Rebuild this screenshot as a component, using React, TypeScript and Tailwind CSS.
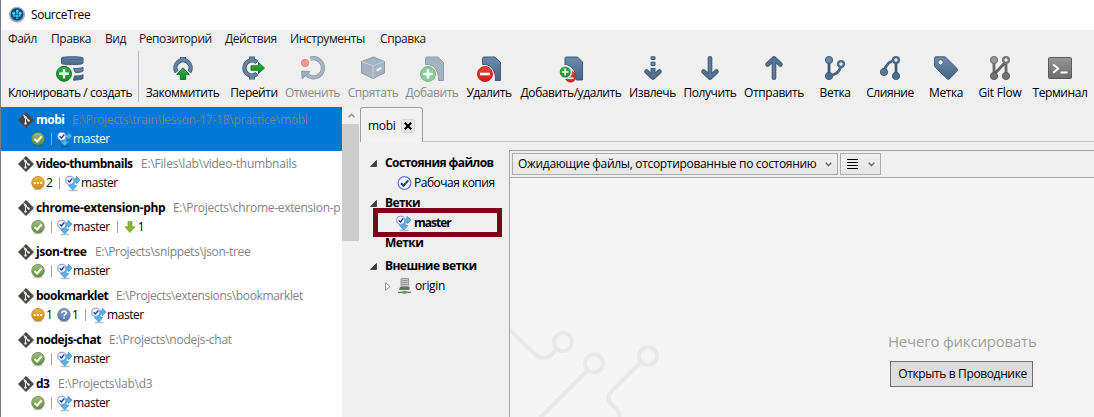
import React from "react";

type Children = { children?: React.ReactNode };

function Defs() {
  return (
    <svg className="absolute h-0 w-0" aria-hidden="true">
      <defs>
        <linearGradient id="steel" x1="0" y1="0" x2="0" y2="1">
          <stop offset="0" stopColor="#6a8bac" />
          <stop offset="1" stopColor="#476585" />
        </linearGradient>
        <linearGradient id="greyUser" gradientUnits="userSpaceOnUse" x1="0" y1="0" x2="0" y2="24">
          <stop offset="0" stopColor="#9a9a9a" />
          <stop offset="1" stopColor="#686868" />
        </linearGradient>
        <linearGradient id="green" x1="0" y1="0" x2="0" y2="1">
          <stop offset="0" stopColor="#35b045" />
          <stop offset="1" stopColor="#158a28" />
        </linearGradient>
        <linearGradient id="red" x1="0" y1="0" x2="0" y2="1">
          <stop offset="0" stopColor="#e8453a" />
          <stop offset="1" stopColor="#c81f18" />
        </linearGradient>
        <linearGradient id="olive" x1="0" y1="0" x2="0" y2="1">
          <stop offset="0" stopColor="#a3bf79" />
          <stop offset="1" stopColor="#5f8f3c" />
        </linearGradient>
        <linearGradient id="amber" x1="0" y1="0" x2="0" y2="1">
          <stop offset="0" stopColor="#f3b53c" />
          <stop offset="1" stopColor="#d68a12" />
        </linearGradient>
        <linearGradient id="slate" x1="0" y1="0" x2="0" y2="1">
          <stop offset="0" stopColor="#86a3c6" />
          <stop offset="1" stopColor="#4d75a6" />
        </linearGradient>
      </defs>
    </svg>
  );
}

function Icon({ children, className = "h-6 w-6", box = "0 0 24 24" }: Children & { className?: string; box?: string }) {
  return (
    <svg viewBox={box} className={`block shrink-0 overflow-visible ${className}`} fill="none">
      {children}
    </svg>
  );
}

const edge = "#3f5a76";

const CloneIcon = () => (
  <Icon className="h-[26px] w-[28px]" box="0 0 28 26">
    <path d="M5.5 2C5.5.3 27 .3 27 2v5.300c0 1.700-21.500 1.700-21.500 0z" fill="url(#steel)" stroke={edge} />
    <path d="M5.500 2.200c0 1.600 21.500 1.600 21.500 0" stroke={edge} strokeWidth=".7" />
    <path d="M17.500 12.600c4 0 7.500-.3 9.500-1.300v3.700c-1.500 1-4.500 1.500-7.500 1.600zM18.500 20c4 0 7-.4 8.500-1.300v3.800c-1.500 1-5 1.500-9.500 1.700z" fill="url(#steel)" stroke={edge} />
    <circle cx="8" cy="17.800" r="7.500" fill="url(#green)" stroke="#0f7a24" />
    <path d="M8 13v9.600M3.200 17.800h9.600" stroke="#fff" strokeWidth="2.400" />
  </Icon>
);

const CommitIcon = () => (
  <Icon>
    <path d="M12 1v5" stroke={edge} strokeWidth="6" />
    <path d="M5.600 16a7.600 7.600 0 1 1 12.800 0" stroke={edge} strokeWidth="4.400" />
    <path d="M12 1.500v4" stroke="#6484a5" strokeWidth="4" />
    <path d="M5.600 15.500a7.600 7.600 0 1 1 12.800 0" stroke="#6484a3" strokeWidth="2.800" />
    <path d="M12 11.800l6.300 6.500h-3.600v5.200H9.300v-5.200H5.700z" fill="url(#green)" stroke="#0f7a24" />
  </Icon>
);

const CheckoutIcon = () => (
  <Icon>
    <path d="M10 .5v5M10 18.500v5" stroke={edge} strokeWidth="6" />
    <path d="M15 6.300a7.600 7.600 0 1 0 0 11.400" stroke={edge} strokeWidth="4.400" />
    <path d="M10 1.200v5M10 18v5" stroke="#6484a3" strokeWidth="4" />
    <path d="M14.500 6a7.600 7.600 0 1 0 0 12" stroke="#6484a3" strokeWidth="2.800" />
    <path d="M22.500 12l-6-5.500v3.300H9v4.400h7.500v3.300z" fill="url(#green)" stroke="#0f7a24" />
  </Icon>
);

const UndoIcon = () => (
  <Icon>
    <path d="M9.500 2.700A9.600 9.600 0 1 1 5.500 18.500" stroke="#8899ab" strokeWidth="4.200" />
    <path d="M9.500 2.700A9.600 9.600 0 1 1 5.500 18.500" stroke="#a7b5c4" strokeWidth="2.800" />
    <path d="M.7 15l8.300.6-7.800 7.200z" fill="#a0afbf" stroke="#8899ab" />
    <circle cx="4" cy="7" r="3.700" fill="#ea9a91" stroke="#dc8178" strokeWidth=".8" />
  </Icon>
);

const StashIcon = () => (
  <Icon>
    <path d="M.5 5.500L12.500 1l11 4.500V17L12 22.500.5 17z" fill="#a4b3c3" stroke="#8c9cac" />
    <path d="M.7 5.500L12 9.800l11.300-4.300M12 9.800v12.500" stroke="#c6d0da" strokeWidth="1" />
    <path d="M15.500 13l5-2.400v2.700l-5 2.300z" fill="#eef1f4" />
  </Icon>
);

const sheet = "M7 1h11l5.500 5.500V24.500h-5C19 13 12.500 7.500 5.500 8.500V2.500C5.500 1.500 6 1 7 1z";

const AddIcon = () => (
  <Icon className="h-[26px] w-6" box="0 0 24 26">
    <path d={sheet} fill="#a4b2c1" stroke="#8e9dac" />
    <circle cx="8" cy="18" r="7.500" fill="#8fcb99" stroke="#7bb886" />
    <path d="M8 13.300v9.400M3.300 18h9.400" stroke="#fff" strokeWidth="2.400" />
  </Icon>
);

const RemoveIcon = () => (
  <Icon className="h-[26px] w-6" box="0 0 24 26">
    <path d={sheet} fill="url(#steel)" stroke={edge} />
    <circle cx="8" cy="18" r="7.500" fill="url(#red)" stroke="#b92a22" />
    <path d="M3 18h10" stroke="#fff" strokeWidth="2.600" />
  </Icon>
);

const AddRemoveIcon = () => (
  <Icon className="h-[26px] w-6" box="0 0 24 26">
    <path d="M7.500 1h11L23.500 6v18h-6C17 14 12 9 6 9V2.500C6 1.500 6.500 1 7.500 1z" fill="url(#steel)" stroke={edge} />
    <circle cx="11.500" cy="20.800" r="5.300" fill="url(#red)" stroke="#b92a22" />
    <path d="M8.500 22.300h6" stroke="#fff" strokeWidth="1.700" />
    <circle cx="6.200" cy="16" r="6.200" fill="url(#green)" stroke="#efefef" strokeWidth="1.400" />
    <path d="M6.200 12.600v6.800M2.800 16h6.800" stroke="#fff" strokeWidth="1.700" />
  </Icon>
);

const arrowHead = "M5.500 15.500l6.500 6 6.500-6";

const FetchIcon = () => (
  <Icon>
    <path d="M12 12v9" stroke={edge} strokeWidth="5" />
    <path d={arrowHead} stroke={edge} strokeWidth="4.600" strokeLinecap="round" strokeLinejoin="round" />
    <path d="M12 12.800v8" stroke="#55769a" strokeWidth="3" />
    <path d={arrowHead} stroke="#53728f" strokeWidth="2.700" strokeLinecap="round" strokeLinejoin="round" />
    <path d="M10 .8h4v2.700h-4zM10 6.200h4v3.300h-4z" fill="#6a8bac" stroke={edge} />
  </Icon>
);

const PullIcon = ({ up = false }: { up?: boolean }) => (
  <Icon className={up ? "h-6 w-6 rotate-180" : "h-6 w-6"}>
    <path d="M12 2.300v19" stroke={edge} strokeWidth="4.600" strokeLinecap="round" />
    <path d={arrowHead} stroke={edge} strokeWidth="4.600" strokeLinecap="round" strokeLinejoin="round" />
    <path d="M12 2.300v18.500" stroke="#5b7c9d" strokeWidth="2.700" strokeLinecap="round" />
    <path d={arrowHead} stroke="#53728f" strokeWidth="2.700" strokeLinecap="round" strokeLinejoin="round" />
  </Icon>
);

const BranchIcon = () => (
  <Icon>
    <path d="M6 4v16" stroke={edge} strokeWidth="2.800" />
    <path d="M6 19.500c6 0 10-3 12-9" stroke="#466483" strokeWidth="2.800" />
    <circle cx="6" cy="4" r="3.600" fill="#6a8bac" stroke={edge} />
    <circle cx="6" cy="20" r="3.600" fill="#4d6c8c" stroke={edge} />
    <circle cx="18" cy="8" r="2.900" fill="#efefef" stroke="#4c6b8b" strokeWidth="2.400" />
  </Icon>
);

const MergeIcon = () => (
  <Icon>
    <path d="M18 4v16" stroke={edge} strokeWidth="2.800" />
    <path d="M18 4.300c-6 0-10 4-12 11" stroke="#466483" strokeWidth="2.800" />
    <circle cx="18" cy="4" r="2.900" fill="#efefef" stroke="#4c6b8b" strokeWidth="2.400" />
    <circle cx="6" cy="16" r="3.600" fill="#587897" stroke={edge} />
    <circle cx="18" cy="20" r="3.600" fill="#4d6c8c" stroke={edge} />
  </Icon>
);

const TagIcon = () => (
  <Icon>
    <path d="M2 .8h8c1 0 1.500.3 2.200 1L23 12.500c.8.900.8 1.800 0 2.700l-7.300 7.500c-.9.800-1.900.8-2.700 0L1.500 11.500C.8 10.900.6 10.300.6 9.500V2.300C.6 1.400 1 .8 2 .8z" fill="url(#steel)" stroke={edge} />
    <circle cx="6.500" cy="6.300" r="2.600" fill="#efefef" stroke={edge} strokeWidth=".8" />
  </Icon>
);

const FlowIcon = () => (
  <Icon>
    <path d="M6 4v16M18 4v16" stroke="#686868" strokeWidth="2.800" />
    <path d="M6 18.500l12-13" stroke="#5e5e5e" strokeWidth="2.800" />
    <circle cx="6" cy="4" r="3.600" fill="#999" stroke="#6c6c6c" />
    <circle cx="6" cy="20" r="3.600" fill="#737373" stroke="#595959" />
    <circle cx="18" cy="20" r="3.600" fill="#737373" stroke="#595959" />
    <circle cx="18" cy="4" r="2.900" fill="#efefef" stroke="#777" strokeWidth="2.400" />
  </Icon>
);

const TerminalIcon = () => (
  <Icon>
    <rect x=".5" y="1.500" width="23" height="21" rx="1" fill="url(#greyUser)" stroke="#5d5d5d" />
    <path d="M5.200 8.500l5 4-5 4.300" stroke="#fff" strokeWidth="2" />
    <path d="M12.500 16.500h7" stroke="#fff" strokeWidth="2" />
  </Icon>
);

type Tool = { label: string; icon: React.ReactNode; cell: string; text?: string };

const tools: Tool[] = [
  { label: "Закоммитить", icon: <CommitIcon />, cell: "ml-[5px] w-[77px]" },
  { label: "Перейти", icon: <CheckoutIcon />, cell: "ml-[9px] w-[48px]" },
  { label: "Отменить", icon: <UndoIcon />, cell: "ml-[7px] w-[55px]", text: "text-[#8a8a8a]" },
  { label: "Спрятать", icon: <StashIcon />, cell: "ml-[7px] w-[52px]", text: "text-[#8a8a8a]" },
  { label: "Добавить", icon: <AddIcon />, cell: "ml-[6px] w-[54px]", text: "text-[#8a8a8a]" },
  { label: "Удалить", icon: <RemoveIcon />, cell: "ml-[7px] w-[46px]" },
  { label: "Добавить/удалить", icon: <AddRemoveIcon />, cell: "ml-[8px] w-[102px]" },
  { label: "Извлечь", icon: <FetchIcon />, cell: "ml-[7px] w-[47px]" },
  { label: "Получить", icon: <PullIcon />, cell: "ml-[6px] w-[56px]" },
  { label: "Отправить", icon: <PullIcon up />, cell: "ml-[6px] w-[60px]" },
  { label: "Ветка", icon: <BranchIcon />, cell: "ml-[15px] w-[32px]" },
  { label: "Слияние", icon: <MergeIcon />, cell: "ml-[14px] w-[50px]" },
  { label: "Метка", icon: <TagIcon />, cell: "ml-[13px] w-[36px]" },
  { label: "Git Flow", icon: <FlowIcon />, cell: "ml-[14px] w-[44px]", text: "tracking-[-0.25px]" },
  { label: "Терминал", icon: <TerminalIcon />, cell: "ml-[9px] w-[58px]" },
];

function ToolButton({ label, icon, cell, text = "" }: Tool) {
  return (
    <div className={`flex shrink-0 flex-col items-center ${cell}`}>
      <div className="flex h-[29px] items-start">{icon}</div>
      <span className={`leading-4 whitespace-nowrap ${text}`}>{label}</span>
    </div>
  );
}

const GitIcon = () => (
  <Icon className="h-4 w-4" box="0 0 16 16">
    <path d="M8 .5L15.500 8 8 15.500.5 8z" fill="#474443" stroke="#474443" strokeLinejoin="round" />
    <path d="M5.500 3l2 2v7M7.500 5.500l3 3" stroke="#eee" strokeWidth="1.100" />
    <circle cx="7.500" cy="5.200" r="1.200" fill="#eee" />
    <circle cx="7.500" cy="11.500" r="1.200" fill="#eee" />
    <circle cx="10.700" cy="8.600" r="1.200" fill="#eee" />
  </Icon>
);

const OkIcon = () => (
  <Icon className="h-[14px] w-[14px]" box="0 0 14 14">
    <ellipse cx="7" cy="13.200" rx="5" ry="1" fill="#000" opacity=".18" />
    <circle cx="7" cy="6.700" r="6.300" fill="url(#olive)" stroke="#5e8440" strokeWidth=".8" />
    <path d="M3.500 7l2.600 2.500 4.500-5.200" stroke="#fff" strokeWidth="2" />
  </Icon>
);

const PendingIcon = () => (
  <Icon className="h-[14px] w-[14px]" box="0 0 14 14">
    <ellipse cx="7" cy="13.200" rx="5" ry="1" fill="#000" opacity=".18" />
    <circle cx="7" cy="6.700" r="6.300" fill="url(#amber)" stroke="#bd8120" strokeWidth=".8" />
    <path d="M2.800 6h2v2h-2zM6 6h2v2H6zM9.200 6h2v2h-2z" fill="#fff" />
  </Icon>
);

const UnknownIcon = () => (
  <Icon className="h-[14px] w-[14px]" box="0 0 14 14">
    <ellipse cx="7" cy="13.200" rx="5" ry="1" fill="#000" opacity=".18" />
    <circle cx="7" cy="6.700" r="6.300" fill="url(#slate)" stroke="#56779d" strokeWidth=".8" />
    <path d="M4.900 5.200c0-2.700 4.300-2.500 4.300-.2C9.200 6.600 7 6.500 7 8.300M7 9.300v1.500" stroke="#fff" strokeWidth="1.500" />
  </Icon>
);

const CurrentIcon = () => (
  <Icon className="h-4 w-4" box="0 0 16 16">
    <ellipse cx="8" cy="15.400" rx="4.500" ry=".9" fill="#000" opacity=".25" />
    <path d="M6.300 10.500V7.500C6.300 5 7.800 3.800 11 3.800V1.300l4.200 3.700L11 8.700V6.800c-1.500 0-1.800.7-1.800 1.800v1.900h2.600L7.800 15l-4.300-4.500z" fill="#55b4ec" stroke="#2d90d0" strokeWidth=".7" />
    <circle cx="4.800" cy="5.300" r="4.100" fill="#f6f8ff" stroke="#7f8bd2" strokeWidth="1" />
    <path d="M2.700 5.300l1.700 1.600 2.900-3.400" stroke="#1c3c9c" strokeWidth="1.400" />
  </Icon>
);

const DownIcon = () => (
  <Icon className="h-3 w-3" box="0 0 12 12">
    <path d="M4 .6h4v5.200h3L6 11.500 1 5.800h3z" fill="#86b833" stroke="#6b9a25" strokeWidth=".7" />
  </Icon>
);

type Repo = { name: string; path: string; pending?: number; unknown?: number; behind?: number; selected?: boolean; nameClass: string; pathClass: string };

const repos: Repo[] = [
  { name: "mobi", path: "E:\\Projects\\train\\lesson-17-18\\practice\\mobi", selected: true, nameClass: "w-[36px] tracking-[-0.5px]", pathClass: "tracking-[-0.26px]" },
  { name: "video-thumbnails", path: "E:\\Files\\lab\\video-thumbnails", pending: 2, nameClass: "w-[105px] tracking-[-0.55px]", pathClass: "tracking-[-0.22px]" },
  { name: "chrome-extension-php", path: "E:\\Projects\\chrome-extension-p", behind: 1, nameClass: "w-[137px] tracking-[-0.32px]", pathClass: "tracking-[-0.3px]" },
  { name: "json-tree", path: "E:\\Projects\\snippets\\json-tree", nameClass: "w-[59px] tracking-[-0.35px]", pathClass: "tracking-[-0.33px]" },
  { name: "bookmarklet", path: "E:\\Projects\\extensions\\bookmarklet", pending: 1, unknown: 1, nameClass: "w-[80px] tracking-[-0.5px]", pathClass: "tracking-[-0.37px]" },
  { name: "nodejs-chat", path: "E:\\Projects\\nodejs-chat", nameClass: "w-[73px] tracking-[-0.45px]", pathClass: "tracking-[-0.26px]" },
  { name: "d3", path: "E:\\Projects\\lab\\d3", nameClass: "w-[22px] tracking-[-0.5px]", pathClass: "tracking-[-0.26px]" },
];

const Bar = ({ className }: { className: string }) => <span className={`h-3 w-px shrink-0 bg-[#a3a3a3] ${className}`} />;

function RepoRow({ name, path, pending, unknown, behind, selected, nameClass, pathClass }: Repo) {
  return (
    <div className={`h-11 shrink-0 pt-1 pl-[17px] whitespace-nowrap ${selected ? "bg-[#0078d7] text-white" : ""}`}>
      <div className="flex h-[18px] items-center">
        <GitIcon />
        <span className={`ml-[2px] shrink-0 font-bold ${nameClass}`}>{name}</span>
        <span className={`text-[#838383] ${pathClass}`}>{path}</span>
      </div>
      <div className="flex h-5 items-center pl-[13px]">
        {pending ? (
          <>
            <PendingIcon />
            <span className="ml-px w-[7px]">{pending}</span>
          </>
        ) : (
          <OkIcon />
        )}
        {unknown && (
          <>
            <span className="ml-1"><UnknownIcon /></span>
            <span className="ml-px w-[7px]">{unknown}</span>
          </>
        )}
        <Bar className="mr-[5px] ml-[6px]" />
        <CurrentIcon />
        <span>master</span>
        {behind && (
          <>
            <Bar className="ml-[7px] mr-[6px]" />
            <DownIcon />
            <span className="ml-[2px]">{behind}</span>
          </>
        )}
      </div>
    </div>
  );
}

const Expanded = () => (
  <Icon className="h-[7px] w-[7px]" box="0 0 7 7">
    <path d="M6.500.5v6h-6z" fill="#404040" stroke="#222" strokeWidth=".7" />
  </Icon>
);

const Chevron = () => (
  <Icon className="h-[5px] w-[7px]" box="0 0 7 5">
    <path d="M.7.700l2.800 2.800L6.300.7" stroke="#666" strokeWidth="1.400" />
  </Icon>
);

function Heading({ title, open = true, className = "" }: { title: string; open?: boolean; className?: string }) {
  return (
    <div className={`flex h-5 items-center ${className}`}>
      <span className="w-[15px] shrink-0">{open && <Expanded />}</span>
      <span className="font-bold tracking-[-0.57px] whitespace-nowrap">{title}</span>
    </div>
  );
}

function Sidebar() {
  return (
    <div className="w-[149px] shrink-0 pt-[11px] pl-[10px]">
      <Heading title="Состояния файлов" />
      <div className="flex h-5 items-center pl-[27px]">
        <Icon className="h-[15px] w-[15px]" box="0 0 15 15">
          <circle cx="7.500" cy="7" r="6.400" fill="#f7f8ff" stroke="#6379d3" strokeWidth="1.200" />
          <path d="M4 7.200l2.600 2.500 4.600-5.400" stroke="#193f9c" strokeWidth="2" />
        </Icon>
        <span className="ml-[2px] tracking-[-0.5px] whitespace-nowrap">Рабочая копия</span>
      </div>
      <Heading title="Ветки" />
      <div className="relative flex h-5 items-center pl-[26px]">
        <CurrentIcon />
        <span className="ml-[2px] font-bold tracking-[-1px]">master</span>
        <div className="absolute top-[-5px] left-[3px] h-[29px] w-[129px] border-5 border-[#7e0018]" />
      </div>
      <Heading title="Метки" open={false} />
      <Heading title="Внешние ветки" className="mt-[3px]" />
      <div className="flex h-5 items-center pl-[15px]">
        <Icon className="h-[9px] w-[6px]" box="0 0 6 9">
          <path d="M.6.800L5 4.500.6 8.200z" fill="#fff" stroke="#999" />
        </Icon>
        <span className="ml-[7px]">
          <Icon className="h-4 w-[13px]" box="0 0 13 16">
            <path d="M3 .5h7.500v8H3z" fill="#c8c8c8" stroke="#989898" />
            <path d="M4 2.500h5.500M4 4.500h5.500M4 6.500h5.500" stroke="#888" strokeWidth=".8" />
            <path d="M2 9h9.500v3H1z" fill="#6c6c6c" />
            <path d="M0 14.300h13" stroke="#666" strokeWidth="1.200" />
            <ellipse cx="6.500" cy="14.300" rx="2.600" ry="1.500" fill="#35b53c" />
          </Icon>
        </span>
        <span className="ml-[4px] tracking-[-0.35px]">origin</span>
      </div>
    </div>
  );
}

function Workspace() {
  return (
    <div className="mt-2 flex min-w-0 flex-1 flex-col border-t border-l border-[#a5a5a5] bg-[#f4f4f4]">
      <div className="flex h-[27px] shrink-0 items-start gap-[2px] border-b border-[#a5a5a5] bg-[#efefef] pt-[2px] pl-[2px]">
        <div className="flex h-[22px] w-[326px] items-center justify-between border border-[#acacac] bg-linear-to-b from-[#f0f0f0] to-[#e6e6e6] pr-[5px] pl-[5px]">
          <span className="tracking-[-0.32px] whitespace-nowrap">Ожидающие файлы, отсортированные по состоянию</span>
          <Chevron />
        </div>
        <div className="flex h-[22px] w-[41px] items-center justify-between border border-[#acacac] bg-linear-to-b from-[#f0f0f0] to-[#e6e6e6] pr-[5px] pl-[6px]">
          <Icon className="h-[10px] w-[11px]" box="0 0 11 10">
            <path d="M0 .5h11M0 3.500h11M0 6.500h11M0 9.500h11" stroke="#000" />
          </Icon>
          <Chevron />
        </div>
      </div>
      <div className="relative min-h-0 flex-1 overflow-hidden">
        <svg className="absolute bottom-0 left-[-10px] h-[97px] w-[240px]" viewBox="0 0 240 97" fill="none" stroke="#e8e8e8" strokeWidth="4">
          <path d="M9 9L35 34c4 5 12 5 16 1l7-7" />
          <circle cx="63" cy="22" r="9" />
          <path d="M38 100L88 50" />
          <circle cx="94" cy="43.500" r="9" />
          <path d="M141 42l-29 29c-5 5-4 10 0 14 4 3 8 7 8 14" />
          <circle cx="148" cy="36" r="9" />
        </svg>
        <div className="flex flex-col items-start pt-[153px] pl-[378px]">
          <span className="text-[15px] leading-5 tracking-[-0.2px] whitespace-nowrap text-[#a0a0a0]">Нечего фиксировать</span>
          <button className="mt-[10px] ml-[2px] h-[26px] w-[143px] border border-[#707070] bg-[#dddddd] pl-[2px] text-center leading-4 tracking-[-0.37px] whitespace-nowrap">
            Открыть в Проводнике
          </button>
        </div>
      </div>
    </div>
  );
}

export default function App() {
  return (
    <div className="flex h-[417px] w-[1094px] flex-col overflow-hidden border-l border-[#707d93] bg-[#efefef] font-['Open_Sans','Noto_Sans',sans-serif] text-[12px] tracking-[-0.43px] text-black">
      <Defs />
      <header className="flex h-[30px] shrink-0 items-center bg-white pl-2">
        <Icon className="h-4 w-4" box="0 0 16 16">
          <circle cx="8" cy="7.700" r="8" fill="#a6b0bd" />
          <circle cx="8" cy="7.300" r="6.400" fill="#054c86" />
          <path d="M8 12V7.500M8 9H4.800V6.500M8 9h3V5.500M8 7V3.500" stroke="#46d3ee" strokeWidth="1.200" />
          <circle cx="4.700" cy="6.300" r="1.500" fill="#46d3ee" />
          <circle cx="8.300" cy="4" r="1.500" fill="#46d3ee" />
          <circle cx="11.200" cy="6.200" r="1.500" fill="#46d3ee" />
        </Icon>
        <span className="ml-[6px]">SourceTree</span>
      </header>
      <nav className="flex h-[18px] shrink-0 items-center pl-[7px] whitespace-nowrap text-[#1a1a1a]">
        <span className="w-[43px]">Файл</span>
        <span className="w-[54px]">Правка</span>
        <span className="w-[34px]">Вид</span>
        <span className="w-[86px]">Репозиторий</span>
        <span className="w-[65px]">Действия</span>
        <span className="w-[90px]">Инструменты</span>
        <span>Справка</span>
      </nav>
      <div className="flex h-[59px] shrink-0 items-start pt-[8px]">
        <ToolButton label="Клонировать / создать" icon={<CloneIcon />} cell="ml-[6px] w-[126px]" />
        <div className="mt-[-5px] ml-[5px] h-[51px] w-px shrink-0 bg-[#b5b9c4]" />
        {tools.map((tool) => (
          <ToolButton key={tool.label} {...tool} />
        ))}
      </div>
      <main className="flex min-h-0 flex-1">
        <section className="flex w-[341px] shrink-0 flex-col overflow-hidden bg-white">
          {repos.map((repo) => (
            <RepoRow key={repo.name} {...repo} />
          ))}
        </section>
        <div className="flex w-[18px] shrink-0 flex-col bg-[#f0f0f0]">
          <div className="flex h-[17px] items-center justify-center">
            <Icon className="h-[5px] w-[7px]" box="0 0 7 5">
              <path d="M.5 4.300l3-3 3 3" stroke="#999" strokeWidth="1.600" />
            </Icon>
          </div>
          <div className="h-[117px] w-[17px] bg-[#cdcdcd]" />
        </div>
        <section className="flex min-w-0 flex-1 flex-col">
          <div className="flex h-[35px] shrink-0">
            <div className="flex w-[63px] items-center justify-between rounded-t-[3px] border border-b-0 border-[#a0a0a0] bg-[#f1f1f1] pt-[2px] pr-[7px] pl-[7px]">
              <span className="tracking-[-0.3px]">mobi</span>
              <span className="flex h-[14px] w-[14px] items-center justify-center rounded-[2px] border border-[#d5d5d5] bg-[#e6e6e6]">
                <Icon className="h-[8px] w-[8px]" box="0 0 8 8">
                  <path d="M.8.800l6.400 6.400M7.200.8L.8 7.200" stroke="#000" strokeWidth="2.200" />
                </Icon>
              </span>
            </div>
            <div className="flex-1 border-b border-[#c6c6c6]" />
          </div>
          <div className="flex min-h-0 flex-1">
            <Sidebar />
            <Workspace />
          </div>
        </section>
      </main>
    </div>
  );
}
